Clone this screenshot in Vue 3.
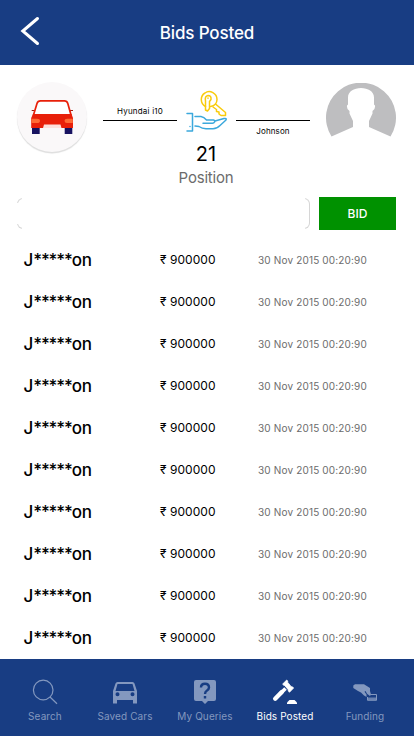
<script setup>
const bids = Array.from({ length: 10 }, (_, id) => ({
  id,
  first: 'J',
  hidden: '*****',
  last: 'on',
  amount: '900000',
  time: '30 Nov 2015 00:20:90',
}))
const tabs = [
  { id: 'search', label: 'Search' },
  { id: 'cars', label: 'Saved Cars' },
  { id: 'queries', label: 'My Queries' },
  { id: 'bids', label: 'Bids Posted' },
  { id: 'funding', label: 'Funding' },
]
const active = 'bids'
</script>

<template>
  <div class="screen">
    <header class="bar">
      <svg class="back" width="22" height="32" viewBox="0 0 22 32">
        <path d="M18.500 3.500 3.800 16 18.500 28.500" fill="none" stroke="#fff" stroke-width="3" stroke-linecap="round" />
      </svg>
      <h1 class="title">Bids Posted</h1>
    </header>

    <section class="deal">
      <div class="car-badge">
        <svg width="70" height="70" viewBox="0 0 70 70">
          <path d="M15 45h7.700v7H15zM47.700 45h7.600v7h-7.600z" fill="#171260" />
          <path d="M14.700 28.500h4M52 28.500h4" stroke="#9c2115" stroke-width="1.200" />
          <path d="M16.500 33 20 21.500Q20.800 18.800 23.500 18.800H47.500Q50 18.800 50.800 21.500L54 33Z" fill="#fff" stroke="#e8200a" stroke-width="1.700" />
          <path d="M16 32H54.500L56 36V46H14.200V36Z" fill="#e8200a" />
          <path d="M14.500 36.700H20Q23 36.700 23 38.700 23 41 20 41H14.500ZM55.800 36.700H50Q47.500 36.700 47.500 38.700 47.500 41 50 41H55.800Z" fill="#ff6a35" />
          <path d="M27 42.500H43.500L44.500 46H26Z" fill="#fde0dc" />
        </svg>
      </div>
      <div class="line car-line"><span>Hyundai i10</span></div>
      <svg class="keys" width="42" height="44" viewBox="0 0 42 44" fill="none" stroke-linecap="round" stroke-linejoin="round">
        <g stroke="#f9cb0c" stroke-width="1.500">
          <path d="M19.500 16.500C14 13.500 14 6 19 3 24 -.5 31 3.500 31 9.500 31 13 28.500 16 24.500 16.500" />
          <path d="M19.500 20V11Q18.500 6 22 5.500 25.500 5.500 25 9.500L23.500 11.500V18.500L21.500 21Z" />
          <path d="M29.500 14 39.500 22.500V25.500H35L33 24V22L30.500 21.500V19.500L27 17" />
          <path d="M22 8v.2" />
        </g>
        <g stroke="#3ba8dc" stroke-width="1.500">
          <path d="M1 23.500H6.500V41H1M4 36.500v.1" />
          <path d="M9 26.500H15Q18 27 20.500 30H27.500Q29.500 30.500 28.500 32 28 33.200 26.500 33.200H17M29 31 38 28.500Q41 28 40 30L34 35.500Q31 38.700 27 38.700H20Q16 38.500 13 36.500L9 36" />
        </g>
      </svg>
      <div class="line buyer-line"><span>Johnson</span></div>
      <svg class="avatar" width="70" height="54" viewBox="0 0 70 54">
        <path d="M5.500 53.500A35 35 0 1 1 64.500 53.500L43 44V38L46.500 30.500V28Q49.500 26.500 49 22.500L48 21.500V14.500C48 8.500 42 5 35 5S22 8.500 22 14.500V21.500L21 22.500Q20.500 26.500 23.500 28V30.500L27 38V44Z" fill="#bebec0" />
      </svg>
    </section>

    <div class="rank">21</div>
    <div class="rank-label">Position</div>

    <form class="bid-form" @submit.prevent>
      <input class="bid-input" type="text" aria-label="Bid amount" />
      <button class="bid-button" type="submit">BID</button>
    </form>

    <ul class="bids">
      <li v-for="bid in bids" :key="bid.id" class="bid">
        <span class="name">{{ bid.first }}<span class="hidden">{{ bid.hidden }}</span>{{ bid.last }}</span>
        <span class="amount">₹ {{ bid.amount }}</span>
        <span class="time">{{ bid.time }}</span>
      </li>
    </ul>

    <nav class="tabs">
      <a v-for="tab in tabs" :key="tab.id" class="tab" :class="{ active: tab.id === active }">
        <svg class="tab-icon" width="26" height="26" viewBox="0 0 26 26" fill="currentColor">
          <g v-if="tab.id === 'search'" fill="none" stroke="currentColor" stroke-width="1.200">
            <circle cx="11.200" cy="11" r="9.800" /><path d="m18 18 7 6.700" />
          </g>
          <path v-else-if="tab.id === 'cars'" fill-rule="evenodd" d="M3.500 4.500Q4 3 5.500 3H20.500Q22 3 22.500 4.500L25 12V24.500H21V21H5V24.500H1V12ZM5.500 5 3.500 12H22.500L20.500 5ZM5.500 13.200a2 2 0 1 0 0 4 2 2 0 1 0 0-4ZM20.500 13.200a2 2 0 1 0 0 4 2 2 0 1 0 0-4Z" />
          <g v-else-if="tab.id === 'queries'">
            <path d="M4 1H22Q24 1 24 3V20Q24 22 22 22H16L13 25 10 22H4Q2 22 2 20V3Q2 1 4 1Z" />
            <path d="M9 8.500Q9 4.800 13 4.800 17 4.800 17 8.500 17 10.200 15 11.500 13 12.700 13 15M13 17V19.500" fill="none" stroke="#183d83" stroke-width="2.400" />
          </g>
          <g v-else-if="tab.id === 'bids'">
            <path d="M10.700 5 14.700 1 15.800 2 15.600 3.200 19.200 7.700 20.400 7.800 21.600 9 17.500 13.200 16.200 12 16.400 10.900 12.700 6.500 11.600 6.300Z" stroke="currentColor" stroke-width=".8" stroke-linejoin="round" />
            <path d="m13.500 9.500-5.500 5.500" stroke="currentColor" stroke-width="3.600" />
            <path d="m9.800 13-6.600 6.700" stroke="currentColor" stroke-width="4.400" stroke-linecap="round" />
            <path d="M15 25V23.500L17.500 21H22.500L25 23.500V25Z" />
          </g>
          <g v-else>
            <path d="M1.300 6.500 3 5.200H12L18 9V12L19 15.500 18 17 15 14.800 13.500 12 12.500 12.700 14.500 15.500V18L12 16.500 9 13.500 6 12 1.300 9Z" />
            <path d="M18.500 15.500H24.500V21.300H15.500V18" fill="none" stroke="currentColor" stroke-width="1" />
            <path d="M15.500 18.500H24.500V21H15.500Z" fill-opacity=".75" />
          </g>
        </svg>
        <span>{{ tab.label }}</span>
      </a>
    </nav>
  </div>
</template>

<style>
body {
  background: #fff;
}
</style>

<style scoped>
.screen {
  display: flex;
  flex-direction: column;
  width: 414px;
  height: 736px;
  overflow: hidden;
  background: #fff;
  color: #000;
  font-family: Inter, "Liberation Sans", sans-serif;
}
.bar {
  display: grid;
  grid-template-columns: 60px 294px 60px;
  height: 65px;
  flex: none;
  background: #183d83;
  color: #fff;
}
.back {
  margin: 15px 0 0 19px;
}
.title {
  margin: 0;
  font-size: 17px;
  font-weight: 500;
  letter-spacing: -0.15px;
  line-height: 67px;
  text-align: center;
}
.deal {
  display: flex;
  align-items: flex-start;
  height: 77px;
  padding: 17px 17px 0;
  box-sizing: border-box;
  flex: none;
}
.car-badge {
  width: 70px;
  height: 70px;
  flex: none;
  border-radius: 50%;
  background: #faf8f9;
  box-shadow: 0 1.5px 1px #dedede;
}
.car-badge svg {
  display: block;
}
.line {
  width: 74px;
  flex: none;
  font-size: 8px;
  line-height: 10px;
  text-align: center;
}
.car-line {
  height: 39px;
  margin-left: 16px;
  padding-top: 24px;
  box-sizing: border-box;
  border-bottom: 1px solid #000;
  letter-spacing: 0.2px;
}
.buyer-line {
  margin: 38px 0 0 8px;
  padding-top: 5px;
  border-top: 1px solid #000;
  letter-spacing: 0.1px;
}
.keys {
  margin: 8px 0 0 9px;
  flex: none;
}
.avatar {
  margin: 1px 0 0 16px;
  flex: none;
}
.rank {
  margin-left: -2px;
  font-size: 20px;
  line-height: 24px;
  text-align: center;
}
.rank-label {
  margin-left: -2px;
  height: 31px;
  color: #6c6c6c;
  font-size: 15px;
  letter-spacing: -0.2px;
  line-height: 23px;
  text-align: center;
}
.bid-form {
  display: flex;
  align-items: flex-start;
  gap: 9px;
  padding: 0 18px 0 17px;
  height: 42px;
  flex: none;
}
/* Border shows on the rounded corners and the right edge only. */
.bid-input {
  width: 293px;
  height: 31px;
  margin: 1px 0 0;
  padding: 0 8px;
  box-sizing: border-box;
  border: 1px solid transparent;
  border-radius: 6px;
  background:
    linear-gradient(#fff, #fff) padding-box,
    linear-gradient(#fff, #fff) 0 50% / 2px 21px no-repeat border-box,
    linear-gradient(#fff, #fff) 50% 0 / 283px 100% no-repeat border-box,
    linear-gradient(#d6d6d6, #d6d6d6) border-box;
  outline: none;
  font: inherit;
}
.bid-button {
  width: 77px;
  height: 33px;
  padding: 0;
  border: 0;
  background: #009100;
  color: #fff;
  font-family: inherit;
  font-size: 12px;
  font-weight: 500;
}
.bids {
  margin: 0;
  padding: 0;
  list-style: none;
}
.bid {
  display: grid;
  grid-template-columns: 136px 98px 1fr;
  align-items: center;
  height: 42px;
  padding-left: 24px;
}
.name {
  margin-left: -0.5px;
  font-size: 17px;
  font-weight: 500;
  letter-spacing: -0.1px;
}
.hidden {
  letter-spacing: -1.15px;
}
.amount {
  padding-bottom: 2px;
  font-size: 12px;
  letter-spacing: 0.05px;
}
.time {
  padding-bottom: 1px;
  color: #6c6c6c;
  font-size: 10px;
  letter-spacing: 0.16px;
}
.tabs {
  display: flex;
  height: 77px;
  padding: 0 9px 0 5px;
  box-sizing: border-box;
  flex: none;
  background: #183d83;
}
.tab {
  display: flex;
  flex-direction: column;
  align-items: center;
  flex: 1;
  padding-top: 20px;
  color: #8398bf;
  font-size: 10px;
  letter-spacing: 0.1px;
  line-height: 14px;
  white-space: nowrap;
}
.tab.active {
  color: #fff;
}
.tab-icon {
  margin-bottom: 4px;
}
</style>
